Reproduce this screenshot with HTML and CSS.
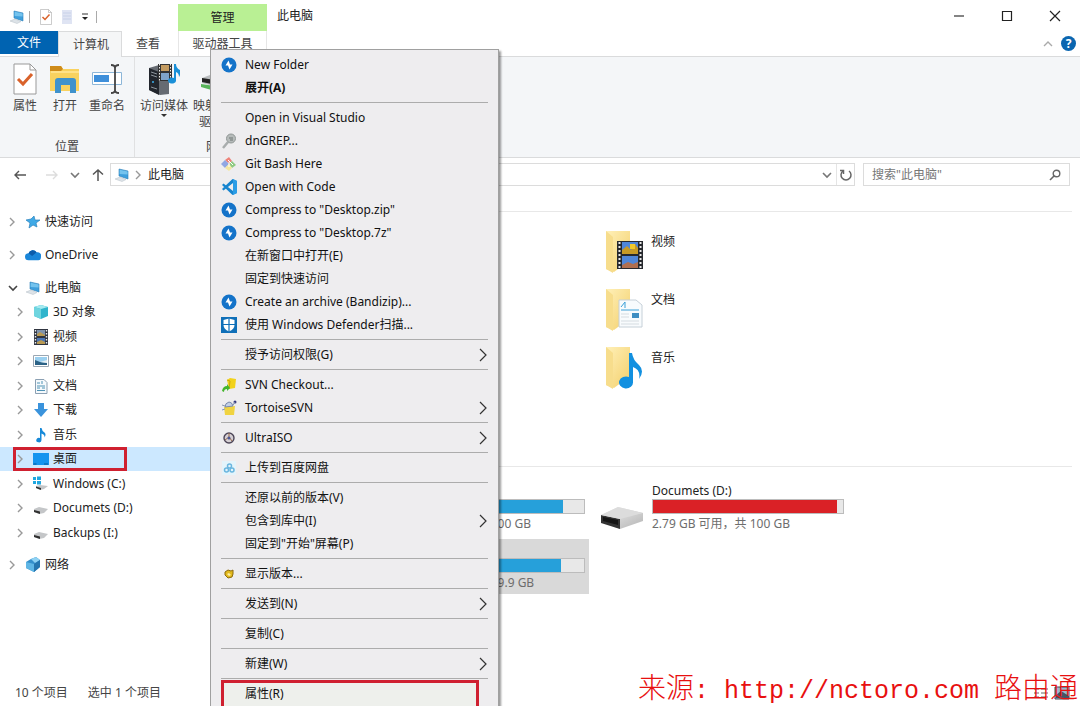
FILE: index.html
```
<!DOCTYPE html>
<html lang="zh-CN">
<head>
    <meta charset="UTF-8">
    <title>此电脑</title>
    <link rel="stylesheet" href="styles.css">
</head>
<body>
    <!-- shared icons -->
    <svg class="defs" width="0" height="0" aria-hidden="true">
        <defs>
            <linearGradient id="gfolder" x1="0" y1="0" x2="1" y2="1"><stop offset="0" stop-color="#fff0b8"/><stop offset="1" stop-color="#f3cf6b"/></linearGradient>
            <linearGradient id="gmetal" x1="0" y1="0" x2="1" y2="1"><stop offset="0" stop-color="#f2f2f2"/><stop offset="1" stop-color="#b4b4b4"/></linearGradient>
        </defs>
        <symbol id="pc" viewBox="0 0 16 16">
            <path d="M5 2l9 2v8l-9-3z" fill="#3f9fdc" stroke="#2d7fb8" stroke-width=".6"/>
            <path d="M5.600 2.800l8 1.800v3L5.600 7z" fill="#74c3ee"/>
            <path d="M1 12l5-2 6 2.500-4 2z" fill="#dde3e8" stroke="#b5bfc7" stroke-width=".5"/>
        </symbol>
        <symbol id="right" viewBox="0 0 8 12"><path d="M2 2l4 4-4 4" fill="none" stroke="currentColor" stroke-width="1.400"/></symbol>
        <symbol id="down" viewBox="0 0 10 8"><path d="M1 2l4 4 4-4" fill="none" stroke="currentColor" stroke-width="1.600"/></symbol>
        <symbol id="sub" viewBox="0 0 10 16"><path d="M2 2l6 6-6 6" fill="none" stroke="#333" stroke-width="1.200"/></symbol>
        <symbol id="check" viewBox="0 0 24 32">
            <path d="M1 1h16l6 6v24H1z" fill="#fff" stroke="#999"/>
            <path d="M17 1v6h6" fill="none" stroke="#999"/>
            <path d="M5 16l5 5 9-10" fill="none" stroke="#d9622b" stroke-width="3"/>
        </symbol>
        <symbol id="star" viewBox="0 0 16 16"><path d="M9 2l1 4L15 6l-4 3 1 4-4-2L4 14l1-5-4-3 5-1z" fill="#3fa9e6" stroke="#2b83bd" stroke-width=".7"/></symbol>
        <symbol id="cloud" viewBox="0 0 18 16">
            <path d="M4 6a5 5 0 0 1 9-1 4 4 0 0 1 5 5q0 4-3 4H4a4 4 0 0 1 0-8z" fill="#1a86d9"/>
            <path d="M4 6a5 5 0 0 1 9-1L8 9z" fill="#0b5cab"/>
        </symbol>
        <symbol id="cube" viewBox="0 0 16 16">
            <path d="M8 1l7 2v9l-7 3-7-3V3z" fill="#2fb4cc"/><path d="M8 1l7 2-7 2-7-2z" fill="#a5eaf0"/><path d="M1 3l7 2v10l-7-3z" fill="#6fd5df"/>
        </symbol>
        <symbol id="film" viewBox="0 0 16 16">
            <path d="M1 0h14v16H1z" fill="#303540"/><path d="M4 1h8v6H4z" fill="#7f93ad"/><path d="M4 9h8v6H4z" fill="#4c76b5"/>
            <path d="M4 5l3-2 5 3v1H4zM4 13l4-2 4 2v2H4z" fill="#b99a52"/>
            <path d="M2.500 1v15M13.500 1v15" stroke="#e9edf2" stroke-width="1.400" stroke-dasharray="1.500 1.500"/>
        </symbol>
        <symbol id="picture" viewBox="0 0 16 16">
            <path d="M.5 2.500h15v11H.5z" fill="#fff" stroke="#9aa7b3"/><path d="M2 4h12v8H2z" fill="#9bd0f0"/><path d="M2 7l5 2 7 1v2H2z" fill="#2b6286"/><path d="M7 9l7-2v3z" fill="#e5eef3"/>
        </symbol>
        <symbol id="doc" viewBox="0 0 16 16">
            <path d="M2.500 1.500H11l3 3v11H2.500z" fill="#f5f9fc" stroke="#8ba0b3"/><path d="M4 5h3M9 3v3M4 8h8M4 10h3M9 10h3M4 12.500h8" stroke="#4f93b5" fill="none"/>
        </symbol>
        <symbol id="download" viewBox="0 0 16 16"><path d="M5 1h6v6h4l-7 8-7-8h4z" fill="#3a93dc"/></symbol>
        <symbol id="note" viewBox="0 0 16 16"><path d="M7 1h1.500q.5 3 3 4.500 2 2 0 5 .5-3-3-4V13a2.600 2.300 0 1 1-1.500-2z" fill="#1689d8"/></symbol>
        <symbol id="desk" viewBox="0 0 16 16"><path d="M0 2h16v12H0z" fill="#1494ef"/><path d="M.5 13h3M11 13h4" stroke="#075a9c"/></symbol>
        <symbol id="disk" viewBox="0 0 16 16"><path d="M1 9l5-2 9 2-4 4-5 1-5-2z" fill="#c4c6c8"/><path d="M1 10l6 1.500V14l-6-2z" fill="#303030"/></symbol>
        <symbol id="windisk" viewBox="0 0 16 16">
            <path d="M0 1h3v3H0zM4 .5h4V4H4zM0 5h3v3H0zM4 5h4v3.500H4z" fill="#1fa7e0"/>
            <path d="M3 10l4-1 8 1-4 3-4 1-4-2z" fill="#c4c6c8"/><path d="M3 10.500l5 1.500v2l-5-2z" fill="#303030"/>
        </symbol>
        <symbol id="net" viewBox="0 0 16 16">
            <path d="M6 2l5-2 4 3v7l-6 5-8-4V5z" fill="#348fcb"/><path d="M6 2l5-2 4 3-5 3z" fill="#8fd2f3"/><path d="M1 5l8 2v8l-8-4z" fill="#5fb6e5"/><path d="M9 7l6-4v7l-6 5z" fill="#2575ae"/>
        </symbol>
        <symbol id="bandi" viewBox="0 0 16 16">
            <circle cx="8" cy="8" r="7.500" fill="#1473c9"/><path d="M7.500 3.500L4.500 8.500h2.500L8.500 12.500l3-5H9z" fill="#fff"/>
        </symbol>
        <symbol id="grep" viewBox="0 0 16 16">
            <path d="M2 15l5-6" stroke="#a9adad" stroke-width="2.500"/><circle cx="10" cy="5.500" r="4.500" fill="#b6bbba" stroke="#929897"/><path d="M8 5h4M9 7h3" stroke="#6f7675"/>
        </symbol>
        <symbol id="git" viewBox="0 0 16 16">
            <path d="M4 4l4-3 3 4-3 3z" fill="#ee8279"/><path d="M0 8l4-4 4 4-4 4z" fill="#91a7e3"/><path d="M8 8l3-3 4 4-4 3z" fill="#8fca82"/><path d="M4 12l4-4 3 4-3 3z" fill="#f4e7a0"/><path d="M7 4l5 5M8 6v5" stroke="#fff"/>
        </symbol>
        <symbol id="code" viewBox="0 0 16 16">
            <path d="M11.500 0L16 2v12l-4.500 2L1 6l1.500-1.500L12 12V4L2.500 11.500 1 10z" fill="#1785cf"/><path d="M12 0l4 2v12l-4 2z" fill="#2b9de6"/>
        </symbol>
        <symbol id="shield" viewBox="0 0 16 16">
            <path d="M0 0h16v16H0z" fill="#0f6fb8"/><path d="M8 1.500l5.500 1.500v5q0 4-5.500 6.500Q2.500 12 2.500 8V3z" fill="#fff"/><path d="M8 1v14M2 7.500h12" stroke="#0f6fb8" stroke-width="1.200"/>
        </symbol>
        <symbol id="svn" viewBox="0 0 16 16">
            <path d="M6 3l3-2 6 1-1 9-6 1z" fill="#f2d21b"/><path d="M6 3l3 1-1 8" fill="none" stroke="#c9a70b"/><path d="M1 14q1-5 5-5V7l3 4-3 3v-2q-3 0-3 3z" fill="#43b52c"/>
        </symbol>
        <symbol id="tortoise" viewBox="0 0 16 16">
            <path d="M3 7l11-1-1 9H4z" fill="#f0d341"/><path d="M4 7q0-4 4-5 3 0 4 4z" fill="#c3d0e6" stroke="#7989aa"/><path d="M1 5l3 1M1 10l3-1" stroke="#8796b2"/><circle cx="14" cy="2" r="1.500" fill="#363a80"/><path d="M12 5l2-3" stroke="#7989aa"/>
        </symbol>
        <symbol id="iso" viewBox="0 0 16 16"><circle cx="8" cy="8" r="5" fill="#d5cfd3" stroke="#4d4658" stroke-width="1.400"/><path d="M8 3v4l-4 3M8 7l3 4" stroke="#9a6b4b" fill="none"/><circle cx="8" cy="8" r="1.500" fill="#4b5795"/></symbol>
        <symbol id="baidu" viewBox="0 0 16 16">
            <path d="M1 1h14v14H1z" fill="#e4f4fb"/><g fill="none" stroke="#6ab6df" stroke-width="1.500"><circle cx="8.500" cy="6" r="2"/><circle cx="5.500" cy="10" r="2"/><circle cx="11" cy="10" r="2"/></g>
        </symbol>
        <symbol id="version" viewBox="0 0 16 16"><path d="M4 6l3-2 3 1 2-1v4l-1 3-4 1-3-3z" fill="#e2b91c" stroke="#8d6b0c"/><path d="M6 8l2-1 2 2-2 1z" fill="#fff0a0"/></symbol>
        <symbol id="folder" viewBox="0 0 40 44">
            <path d="M8 2h17v28L10 40z" fill="#eccb73"/><path d="M2 1h24v29L10 42 2 39z" fill="url(#gfolder)"/><path d="M2 1l7 6v36l-7-4z" fill="#f7dd8c"/>
        </symbol>
    </svg>

    <div class="window">
        <header class="top">
            <div class="quick">
                <svg class="i16"><use href="#pc"/></svg>
                <span class="bar"></span>
                <svg class="i14"><use href="#check"/></svg>
                <svg class="i14" viewBox="0 0 14 16"><path d="M2 1h10v14H2z" fill="#dfe4f3"/><path d="M3 4h8M3 7h8M3 10h8" stroke="#c8d1e8"/></svg>
                <svg class="i8" viewBox="0 0 8 8"><path d="M1 1h6" stroke="#333"/><path d="M1 4h6L4 7z" fill="#222"/></svg>
                <span class="bar"></span>
            </div>
            <nav class="tabs">
                <button class="tab file">文件</button>
                <button class="tab active">计算机</button>
                <button class="tab">查看</button>
            </nav>
            <div class="context">
                <span class="manage">管理</span>
                <button class="tab tool">驱动器工具</button>
            </div>
            <h1 class="title">此电脑</h1>
            <div class="controls">
                <div class="winbtns">
                    <button aria-label="最小化"><svg viewBox="0 0 12 12"><path d="M1 6h10" stroke="#333" stroke-width="1.200"/></svg></button>
                    <button aria-label="最大化"><svg viewBox="0 0 12 12"><path d="M1.500 1.500h9v9h-9z" fill="none" stroke="#222" stroke-width="1.200"/></svg></button>
                    <button aria-label="关闭"><svg viewBox="0 0 12 12"><path d="M1 1l10 10M11 1L1 11" stroke="#222" stroke-width="1.200"/></svg></button>
                </div>
                <div class="helpbtns">
                    <button aria-label="折叠"><svg class="fold" viewBox="0 0 10 8"><path d="M1 6l4-4 4 4" fill="none" stroke="#aaa" stroke-width="1.400"/></svg></button>
                    <button class="help">?</button>
                </div>
            </div>
        </header>

        <section class="ribbon">
            <div class="group place">
                <div class="tools">
                    <button><svg class="i32"><use href="#check"/></svg>属性</button>
                    <button><svg class="i32" viewBox="0 0 32 32"><path d="M1 3h11l2 3h16v22H1z" fill="#f9d25f"/><path d="M1 3h11l2 3-2 2H1z" fill="#cf8c1a"/><path d="M2 8h28v2H2z" fill="#ffe28a"/><path d="M6 30V18q0-3 3-3h15q3 0 3 3v12h-6v-8h-9v8z" fill="#3f92cc"/></svg>打开</button>
                    <button><svg class="i32" viewBox="0 0 32 32"><path d="M1.500 9.500h29v12h-29z" fill="#fff" stroke="#8cb6d8"/><path d="M3 12h15v7H3z" fill="#3e8fda"/><path d="M20 2q4 0 4 3 0-3 4-3M24 5v22M20 30q4 0 4-3 0 3 4 3" fill="none" stroke="#444" stroke-width="1.800"/></svg>重命名</button>
                </div>
                <span class="caption">位置</span>
            </div>
            <div class="group network">
                <div class="tools">
                    <button><svg class="i32" viewBox="0 0 32 32"><path d="M1 5l10-3 10 4v25l-9 1L1 27z" fill="#666b72"/><path d="M1 5l10 4v23L1 27z" fill="#22262d"/><path d="M3 9l6 2M3 12l6 2M3 24l6 2" stroke="#8e969e"/><circle cx="5" cy="19" r="1" fill="#3bb0ee"/><path d="M10 1h14v17H10z" fill="#333"/><path d="M13 2h8v6h-8z" fill="#c39b60"/><path d="M13 10h8v7h-8z" fill="#7fa3c8"/><path d="M11.500 1v17M22.500 1v17" stroke="#eee" stroke-dasharray="1.500 1.500"/><path d="M26 1h2q0 4 4 6 1 4-1 7 0-4-3-5v9a4 3 0 1 1-2-3z" fill="#1a90d8"/></svg>访问媒体<i class="drop"></i></button>
                    <button><svg class="i32" viewBox="0 0 32 32"><path d="M1 15l8-3 20 3v7l-9 3-19-5z" fill="#b9bdbf"/><path d="M1 15l19 3v5L1 19z" fill="#222"/><path d="M0 21l14 2v5L0 24z" fill="#58b45a"/></svg>映射网络<br>驱动器</button>
                </div>
                <span class="caption">网络</span>
            </div>
        </section>

        <div class="navbar">
            <div class="arrows">
                <button class="back" aria-label="后退"><svg viewBox="0 0 14 14"><path d="M13 7H2M6 3L2 7l4 4" fill="none" stroke="#555" stroke-width="1.400"/></svg></button>
                <button aria-label="前进"><svg viewBox="0 0 14 14"><path d="M1 7h11M8 3l4 4-4 4" fill="none" stroke="#ddd" stroke-width="1.400"/></svg></button>
                <button aria-label="最近"><svg class="caret"><use href="#down"/></svg></button>
                <button aria-label="向上"><svg viewBox="0 0 14 14"><path d="M7 13V2M2 6.500L7 2l5 4.500" fill="none" stroke="#555" stroke-width="1.500"/></svg></button>
            </div>
            <div class="address">
                <svg class="i16"><use href="#pc"/></svg>
                <svg class="chev"><use href="#right"/></svg>
                <span class="path">此电脑</span>
                <button aria-label="展开地址"><svg class="caret"><use href="#down"/></svg></button>
                <button class="refresh" aria-label="刷新"><svg viewBox="0 0 14 14"><path d="M4 3a5 5 0 1 0 6 0M1 2.500h3.500V6" fill="none" stroke="#666" stroke-width="1.500"/></svg></button>
            </div>
            <div class="search">
                <input type="text" aria-label="搜索" placeholder='搜索"此电脑"'>
                <svg class="i12" viewBox="0 0 12 12"><circle cx="7.500" cy="4.500" r="3.300" fill="none" stroke="#666" stroke-width="1.400"/><path d="M5 7l-4 4" stroke="#666" stroke-width="1.600"/></svg>
            </div>
        </div>

        <div class="body">
            <ul class="tree">
                <li class="root"><svg class="chev"><use href="#right"/></svg><svg class="i16"><use href="#star"/></svg>快速访问</li>
                <li class="root"><svg class="chev"><use href="#right"/></svg><svg class="i16"><use href="#cloud"/></svg>OneDrive</li>
                <li>
                    <div class="root"><svg class="chev open"><use href="#down"/></svg><svg class="i16"><use href="#pc"/></svg>此电脑</div>
                    <ul class="children">
                        <li><svg class="chev"><use href="#right"/></svg><svg class="i16"><use href="#cube"/></svg>3D 对象</li>
                        <li><svg class="chev"><use href="#right"/></svg><svg class="i16"><use href="#film"/></svg>视频</li>
                        <li><svg class="chev"><use href="#right"/></svg><svg class="i16"><use href="#picture"/></svg>图片</li>
                        <li><svg class="chev"><use href="#right"/></svg><svg class="i16"><use href="#doc"/></svg>文档</li>
                        <li><svg class="chev"><use href="#right"/></svg><svg class="i16"><use href="#download"/></svg>下载</li>
                        <li><svg class="chev"><use href="#right"/></svg><svg class="i16"><use href="#note"/></svg>音乐</li>
                        <li class="selected"><span class="mark"><svg class="chev"><use href="#right"/></svg><svg class="i16"><use href="#desk"/></svg>桌面</span></li>
                        <li><svg class="chev"><use href="#right"/></svg><svg class="i16"><use href="#windisk"/></svg>Windows (C:)</li>
                        <li><svg class="chev"><use href="#right"/></svg><svg class="i16"><use href="#disk"/></svg>Documets (D:)</li>
                        <li><svg class="chev"><use href="#right"/></svg><svg class="i16"><use href="#disk"/></svg>Backups (I:)</li>
                    </ul>
                </li>
                <li class="root"><svg class="chev"><use href="#right"/></svg><svg class="i16"><use href="#net"/></svg>网络</li>
            </ul>

            <main class="files">
                <section class="folders">
                    <div class="folder">
                        <svg class="big" viewBox="0 0 40 44"><use href="#folder"/><svg x="13" y="11" width="26" height="28" viewBox="0 0 26 28"><path d="M0 0h26v28H0z" fill="#26292e"/><path d="M5 1h16v12H5zM5 15h16v12H5z" fill="#4f86d8"/><path d="M5 9l5-4 4 4 4-6 3 4v6H5z" fill="#c79a25"/><path d="M13 3h5v5h-5z" fill="#f1c92d"/><path d="M5 24l6-3 5 2 5-2v6H5z" fill="#b06f50"/><path d="M2.500 1v27M23.500 1v27" stroke="#e9e9e9" stroke-width="2" stroke-dasharray="2 2"/></svg></svg>
                        <span>视频</span>
                    </div>
                    <div class="folder">
                        <svg class="big" viewBox="0 0 40 44"><use href="#folder"/><path d="M15 12h17l6 5v22H15z" fill="#f8fbfd" stroke="#c6d0d8"/><path d="M17 19l4-5v6M17 22h18" stroke="#3aa0d8" fill="none"/><path d="M28 25h7v5h-7z" fill="#3f8ec2"/><path d="M17 26h8M17 29h8M17 33h18M17 36h18" stroke="#d5dce1"/></svg>
                        <span>文档</span>
                    </div>
                    <div class="folder">
                        <svg class="big" viewBox="0 0 40 44"><use href="#folder"/><path d="M25 7h3q1 7 7 12 6 6 0 14 2-9-6-12v15a7 6 0 1 1-4-5z" fill="#1290e0"/></svg>
                        <span>音乐</span>
                    </div>
                </section>
                <section class="drives">
                    <div class="drive">
                        <span class="name">&nbsp;</span>
                        <div class="meter"><div class="used" style="width: 89%"></div></div>
                        <span class="space">11.2 GB 可用，共 100 GB</span>
                    </div>
                    <div class="drive">
                        <svg class="diskicon" viewBox="0 0 42 24"><path d="M0 9L17 1l25 6v8L19 23 0 16z" fill="url(#gmetal)"/><path d="M0 9l19 4v10L0 17z" fill="#333"/><path d="M2 11l15 3v5L2 15z" fill="#151515"/><path d="M0 9L17 1l25 6-23 6z" fill="#dcdcdc"/></svg>
                        <span class="name">Documets (D:)</span>
                        <div class="meter"><div class="used full" style="width: 97%"></div></div>
                        <span class="space">2.79 GB 可用，共 100 GB</span>
                    </div>
                    <div class="drive current">
                        <span class="name">&nbsp;</span>
                        <div class="meter"><div class="used" style="width: 88%"></div></div>
                        <span class="space">12.0 GB 可用，共 99.9 GB</span>
                    </div>
                </section>
            </main>
        </div>

        <footer class="status">
            <span>10 个项目</span>
            <span>选中 1 个项目</span>
            <svg class="views" viewBox="0 0 40 14"><path d="M2 3h5M9 3h7M2 7h5M9 7h7M2 11h5M9 11h7" stroke="#666"/><path d="M23 1h14v12H23z" fill="#9cb9d0" stroke="#445"/><path d="M24 9l5-4 8 5v2H24z" fill="#456"/></svg>
        </footer>
    </div>

    <div class="menu" role="menu">
        <button role="menuitem"><svg class="i16"><use href="#bandi"/></svg>New Folder</button>
        <button role="menuitem" class="bold">展开(A)</button>
        <hr>
        <button role="menuitem">Open in Visual Studio</button>
        <button role="menuitem"><svg class="i16"><use href="#grep"/></svg>dnGREP...</button>
        <button role="menuitem"><svg class="i16"><use href="#git"/></svg>Git Bash Here</button>
        <button role="menuitem"><svg class="i16"><use href="#code"/></svg>Open with Code</button>
        <button role="menuitem"><svg class="i16"><use href="#bandi"/></svg>Compress to "Desktop.zip"</button>
        <button role="menuitem"><svg class="i16"><use href="#bandi"/></svg>Compress to "Desktop.7z"</button>
        <button role="menuitem">在新窗口中打开(E)</button>
        <button role="menuitem">固定到快速访问</button>
        <button role="menuitem"><svg class="i16"><use href="#bandi"/></svg>Create an archive (Bandizip)...</button>
        <button role="menuitem"><svg class="i16"><use href="#shield"/></svg>使用 Windows Defender扫描...</button>
        <hr>
        <button role="menuitem">授予访问权限(G)<svg class="sub"><use href="#sub"/></svg></button>
        <hr>
        <button role="menuitem"><svg class="i16"><use href="#svn"/></svg>SVN Checkout...</button>
        <button role="menuitem"><svg class="i16"><use href="#tortoise"/></svg>TortoiseSVN<svg class="sub"><use href="#sub"/></svg></button>
        <hr>
        <button role="menuitem"><svg class="i16"><use href="#iso"/></svg>UltraISO<svg class="sub"><use href="#sub"/></svg></button>
        <hr>
        <button role="menuitem"><svg class="i16"><use href="#baidu"/></svg>上传到百度网盘</button>
        <hr>
        <button role="menuitem">还原以前的版本(V)</button>
        <button role="menuitem">包含到库中(I)<svg class="sub"><use href="#sub"/></svg></button>
        <button role="menuitem">固定到"开始"屏幕(P)</button>
        <hr>
        <button role="menuitem"><svg class="i16"><use href="#version"/></svg>显示版本...</button>
        <hr>
        <button role="menuitem">发送到(N)<svg class="sub"><use href="#sub"/></svg></button>
        <hr>
        <button role="menuitem">复制(C)</button>
        <hr>
        <button role="menuitem">新建(W)<svg class="sub"><use href="#sub"/></svg></button>
        <hr>
        <button role="menuitem" class="props">属性(R)</button>
    </div>

    <p class="source">来源<span>: http://nctoro.com </span>路由通</p>
</body>
</html>
```
FILE: styles.css
```
*{
    box-sizing: border-box;
}
body{
    margin: 0;
    height: 100vh;
    overflow: hidden;
    position: relative;
    background-color: #fff;
    color: #222;
    font-family: "Noto Sans", "Noto Sans CJK SC", sans-serif;
    font-size: 12px;
    line-height: 16px;
}
button, input{
    font: inherit;
    color: inherit;
    border: none;
    background: none;
    padding: 0;
}
ul{
    list-style: none;
    margin: 0;
    padding: 0;
}
svg{
    flex: none;
}
.defs{
    position: absolute;
}
.i8{ width: 8px; height: 8px; }
.i12{ width: 12px; height: 12px; }
.i14{ width: 14px; height: 16px; }
.i16{ width: 16px; height: 16px; }
.i32{ width: 32px; height: 32px; }
.chev{
    width: 8px;
    height: 12px;
    color: #999;
}
.caret{
    width: 10px;
    height: 8px;
    color: #777;
}
.window{
    height: 100vh;
    display: flex;
    flex-direction: column;
}

/* title bar and tabs */
.top{
    display: grid;
    grid-template-columns: 178px 89px 1fr auto;
    grid-template-rows: 31px 25px;
    border-bottom: 1px solid #dadbdc;
}
.quick{
    display: flex;
    align-items: center;
    gap: 7px;
    padding: 2px 0 0 9px;
}
.quick .bar{
    width: 1px;
    height: 12px;
    background-color: #aaa;
}
.quick .bar:first-of-type{
    margin: 0 2px 0 -3px;
}
.tabs{
    grid-row: 2;
    display: flex;
}
.tab{
    padding: 0 14px;
    color: #444;
    white-space: nowrap;
}
.file{
    width: 58px;
    height: 23px;
    background-color: #0063b1;
    color: #fff;
}
.active{
    width: 64px;
    border: 1px solid #dadbdc;
    border-bottom: none;
    background-color: #f5f6f7;
    margin-bottom: -1px;
}
.context{
    grid-column: 2;
    grid-row: 1 / 3;
    display: flex;
    flex-direction: column;
    margin-top: 4px;
}
.manage{
    height: 27px;
    padding-top: 6px;
    text-align: center;
    background-color: #b9f094;
}
.tool{
    height: 25px;
    padding: 0;
    border: 1px solid #e6e6e6;
    border-width: 0 1px;
}
.title{
    margin: 8px 0 0 10px;
    font-size: 12px;
    font-weight: normal;
}
.controls{
    grid-column: 4;
    grid-row: 1 / 3;
}
.winbtns, .helpbtns{
    display: flex;
    justify-content: flex-end;
    align-items: center;
    height: 31px;
}
.winbtns{
    padding-right: 1px;
}
.winbtns button{
    width: 48px;
    height: 31px;
}
.winbtns svg{
    width: 12px;
    height: 12px;
    vertical-align: middle;
}
.helpbtns{
    height: 25px;
    gap: 8px;
    padding-right: 4px;
}
.fold{
    width: 10px;
    height: 8px;
}
.help{
    width: 15px;
    height: 15px;
    line-height: 15px;
    border-radius: 50%;
    background-color: #0b66b0;
    color: #fff;
    font-weight: bold;
}

/* ribbon */
.ribbon{
    display: flex;
    height: 101px;
    background-color: #f4f6f8;
    border-bottom: 1px solid #dadbdc;
    color: #444;
}
.group{
    display: flex;
    flex-direction: column;
    justify-content: space-between;
    align-items: center;
    padding: 6px 0 2px;
    border-right: 1px solid #e0e1e2;
}
.place{
    width: 135px;
}
.network{
    width: 167px;
}
.tools{
    display: flex;
    align-items: flex-start;
    gap: 8px;
}
.network .tools{
    align-self: flex-start;
    padding-left: 5px;
    gap: 5px;
}
.tools button{
    display: flex;
    flex-direction: column;
    align-items: center;
    white-space: nowrap;
}
.tools svg{
    margin-bottom: 3px;
}
.drop{
    border: 3px solid transparent;
    border-top-color: #333;
}

/* address row */
.navbar{
    display: flex;
    align-items: center;
    height: 33px;
    padding-right: 10px;
}
.arrows{
    display: flex;
    align-items: center;
    gap: 11px;
    width: 110px;
    padding-left: 13px;
}
.arrows button{
    display: flex;
}
.arrows .back{
    margin-right: 7px;
}
.arrows svg:not(.caret){
    width: 14px;
    height: 14px;
}
.address, .search{
    display: flex;
    align-items: center;
    height: 23px;
    border: 1px solid #dcdcdc;
}
.address{
    flex: 1;
    gap: 4px;
    padding-left: 3px;
}
.path{
    flex: 1;
    padding-left: 2px;
}
.refresh{
    display: flex;
    width: 18px;
    height: 21px;
    align-items: center;
    justify-content: center;
    border-left: 1px solid #e5e5e5;
}
.refresh svg{
    width: 14px;
    height: 14px;
}
.search{
    width: 207px;
    margin-left: 8px;
    padding: 0 8px;
}
.search input{
    flex: 1;
    min-width: 0;
    outline: none;
}
.search input::placeholder{
    color: #777;
}

/* tree and file list */
.body{
    flex: 1;
    display: flex;
    min-height: 0;
}
.tree{
    width: 211px;
    padding-top: 18px;
}
.root, .children li{
    display: flex;
    align-items: center;
    gap: 4px;
}
.root{
    height: 25px;
    padding-left: 8px;
    margin-bottom: 8px;
}
.root .i16{
    margin-left: 5px;
}
.root .open{
    width: 10px;
    height: 8px;
    margin-right: -2px;
    color: #444;
}
div.root{
    margin-bottom: 0;
}
.children{
    display: grid;
    grid-auto-rows: 24px 25px;
    margin-bottom: 7px;
}
.children li{
    padding-left: 16px;
}
.children .i16{
    margin-left: 5px;
}
.children .selected{
    padding-left: 13px;
    background-color: #cce8ff;
}
.mark{
    display: flex;
    align-items: center;
    gap: 4px;
    width: 114px;
    height: 24px;
    border: 3px solid #cf2030;
}
.files{
    flex: 1;
    padding: 20px 8px 0 135px;
}
.folders, .drives{
    border-top: 1px solid #e8e8e8;
}
.folders{
    height: 255px;
    padding: 18px 0 0 258px;
}
.folder{
    display: flex;
    gap: 7px;
    height: 58px;
}
.folder span{
    padding-top: 4px;
}
.big{
    width: 40px;
    height: 44px;
}
.drives{
    display: grid;
    grid-template-columns: 243px 243px;
    grid-auto-rows: 55px;
    gap: 4px 16px;
    padding-top: 13px;
}
.drive{
    display: grid;
    grid-template-columns: 40px 192px;
    grid-template-rows: 19px 15px 18px;
    column-gap: 7px;
}
.drive > *{
    grid-column: 2;
}
.drive .diskicon{
    grid-column: 1;
    grid-row: 1 / 4;
    width: 42px;
    height: 24px;
    margin-top: 26px;
    margin-left: -4px;
}
.name{
    align-self: end;
}
.current{
    background-color: #d9d9d9;
}
.meter{
    border: 1px solid #bcbcbc;
    background-color: #e8e8e8;
}
.used{
    height: 100%;
    background-color: #26a0da;
}
.full{
    background-color: #da2126;
}
.space{
    padding-top: 2px;
    color: #6d6d6d;
    white-space: nowrap;
}
.status{
    display: flex;
    align-items: center;
    gap: 20px;
    height: 26px;
    padding: 0 8px 0 15px;
    color: #444;
}
.views{
    width: 40px;
    height: 14px;
    margin-left: auto;
}

/* context menu, opened over the window */
.menu{
    position: absolute;
    left: 210px;
    top: 49px;
    width: 289px;
    padding: 3px 10px;
    border: 1px solid #a0a0a0;
    background-color: #eeedef;
    box-shadow: 2px 2px 2px rgba(0, 0, 0, 0.4);
    color: #111;
}
.menu button{
    display: grid;
    grid-template-columns: 16px 1fr 10px;
    column-gap: 8px;
    align-items: center;
    width: 100%;
    height: 23px;
    text-align: left;
    white-space: nowrap;
}
.menu button:not(:has(.i16))::before{
    content: "";
}
.menu .sub{
    width: 10px;
    height: 16px;
}
.menu hr{
    height: 1px;
    margin: 3px 0;
    border: none;
    background-color: #acacac;
}
.menu .bold{
    font-weight: bold;
}
.menu .props{
    width: 258px;
    height: 32px;
    margin-top: -2px;
    padding: 0 0 4px;
    border: 3px solid #cf2030;
    background-color: #eef0ec;
    grid-template-columns: 13px 1fr 10px;
}

.source{
    position: absolute;
    right: 2px;
    bottom: 0;
    margin: 0;
    color: #e81010;
    font-family: "Liberation Mono", "Noto Sans CJK SC", monospace;
    font-size: 28px;
    font-weight: 300;
    line-height: 28px;
    white-space: pre;
}
.source span{
    font-size: 25px;
}
```
